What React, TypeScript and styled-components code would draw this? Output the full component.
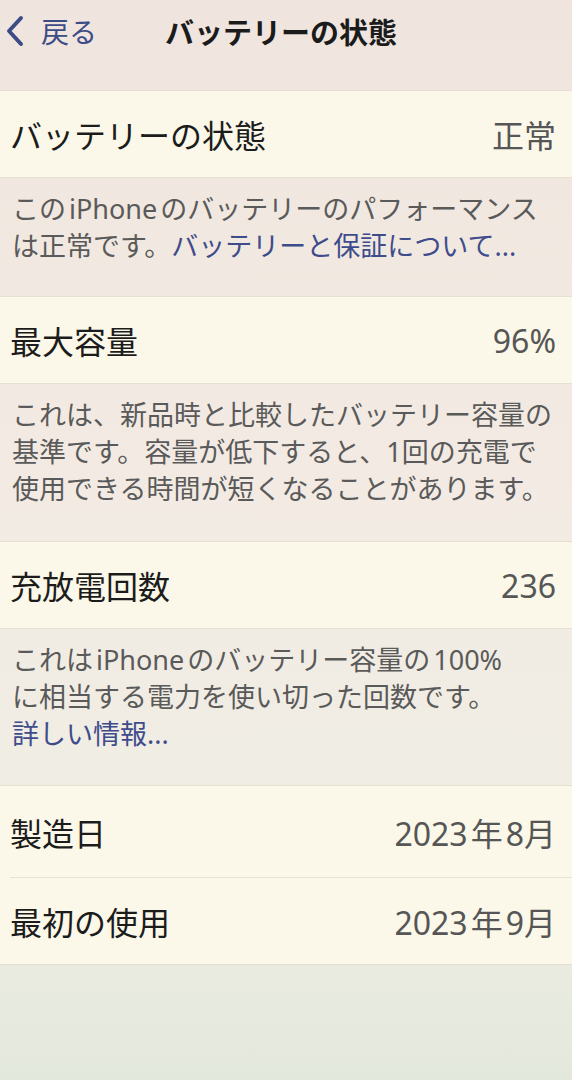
import { createGlobalStyle } from 'styled-components'
import styled from 'styled-components'

const GlobalStyle = createGlobalStyle`
  html, body {
    margin: 0;
    padding: 0;
  }
  body {
    width: 572px;
    min-height: 1080px;
    background: linear-gradient(180deg, #efe5de 0%, #f3ebe3 45%, #efeee4 80%, #e3e8dd 100%);
    font-family: 'Noto Sans', 'Noto Sans CJK JP', sans-serif;
    -webkit-font-smoothing: antialiased;
  }
`

const Screen = styled.div`
  display: flex;
  flex-direction: column;
  width: 572px;
  min-height: 1080px;
`

const NavBar = styled.div`
  display: flex;
  align-items: center;
  height: 90px;
  padding: 0 0 28px 5px;
  box-sizing: border-box;
`

const BackButton = styled.div`
  display: flex;
  align-items: center;
  gap: 16px;
  width: 160px;
  color: #3d4b86;
  font-size: 28px;
`

const NavTitle = styled.div`
  font-size: 29px;
  font-weight: 700;
  color: #1b1b1b;
`

const Group = styled.div`
  display: flex;
  flex-direction: column;
  background: #fbf8e9;
  border-top: 1px solid #e6e0d3;
  border-bottom: 1px solid #e6e0d3;
`

const Cell = styled.div<{ divider?: boolean }>`
  display: flex;
  align-items: center;
  justify-content: space-between;
  height: ${({ divider }) => (divider ? '91px' : '86px')};
  margin-left: 10px;
  padding-right: 16px;
  border-bottom: ${({ divider }) => (divider ? '1px solid #e8e3d5' : 'none')};
`

const Label = styled.span`
  font-size: 32px;
  color: #1c1c1c;
`

const Value = styled.span`
  font-size: 32px;
  color: #565656;
`

const Footer = styled.div<{ pb: number }>`
  padding: 12px 8px ${({ pb }) => pb}px 12px;
  font-size: 27px;
  line-height: 37px;
  color: #5a5a5a;
  white-space: nowrap;
`

const Link = styled.span`
  color: #3e4c8c;
`

const Latin = styled.span`
  margin: 0 3px;
`

const Chevron = () => (
  <svg width="20" height="32" viewBox="0 0 20 32">
    <path
      d="M16 3 L4 16 L16 29"
      fill="none"
      stroke="#3d4b86"
      strokeWidth="4"
      strokeLinecap="round"
      strokeLinejoin="round"
    />
  </svg>
)

const App = () => {
  return (
    <Screen>
      <GlobalStyle />
      <NavBar>
        <BackButton>
          <Chevron />
          戻る
        </BackButton>
        <NavTitle>バッテリーの状態</NavTitle>
      </NavBar>

      <Group>
        <Cell>
          <Label>バッテリーの状態</Label>
          <Value>正常</Value>
        </Cell>
      </Group>
      <Footer pb={32}>
        この<Latin>iPhone</Latin>のバッテリーのパフォーマンス
        <br />
        は正常です。<Link>バッテリーと保証について...</Link>
      </Footer>

      <Group>
        <Cell>
          <Label>最大容量</Label>
          <Value>96%</Value>
        </Cell>
      </Group>
      <Footer pb={34}>
        これは、新品時と比較したバッテリー容量の
        <br />
        基準です。容量が低下すると、1回の充電で
        <br />
        使用できる時間が短くなることがあります。
      </Footer>

      <Group>
        <Cell>
          <Label>充放電回数</Label>
          <Value>236</Value>
        </Cell>
      </Group>
      <Footer pb={33}>
        これは<Latin>iPhone</Latin>のバッテリー容量の<Latin>100%</Latin>
        <br />
        に相当する電力を使い切った回数です。
        <br />
        <Link>詳しい情報...</Link>
      </Footer>

      <Group>
        <Cell divider>
          <Label>製造日</Label>
          <Value>
            2023<Latin>年</Latin>8月
          </Value>
        </Cell>
        <Cell>
          <Label>最初の使用</Label>
          <Value>
            2023<Latin>年</Latin>9月
          </Value>
        </Cell>
      </Group>
    </Screen>
  )
}

export default App
